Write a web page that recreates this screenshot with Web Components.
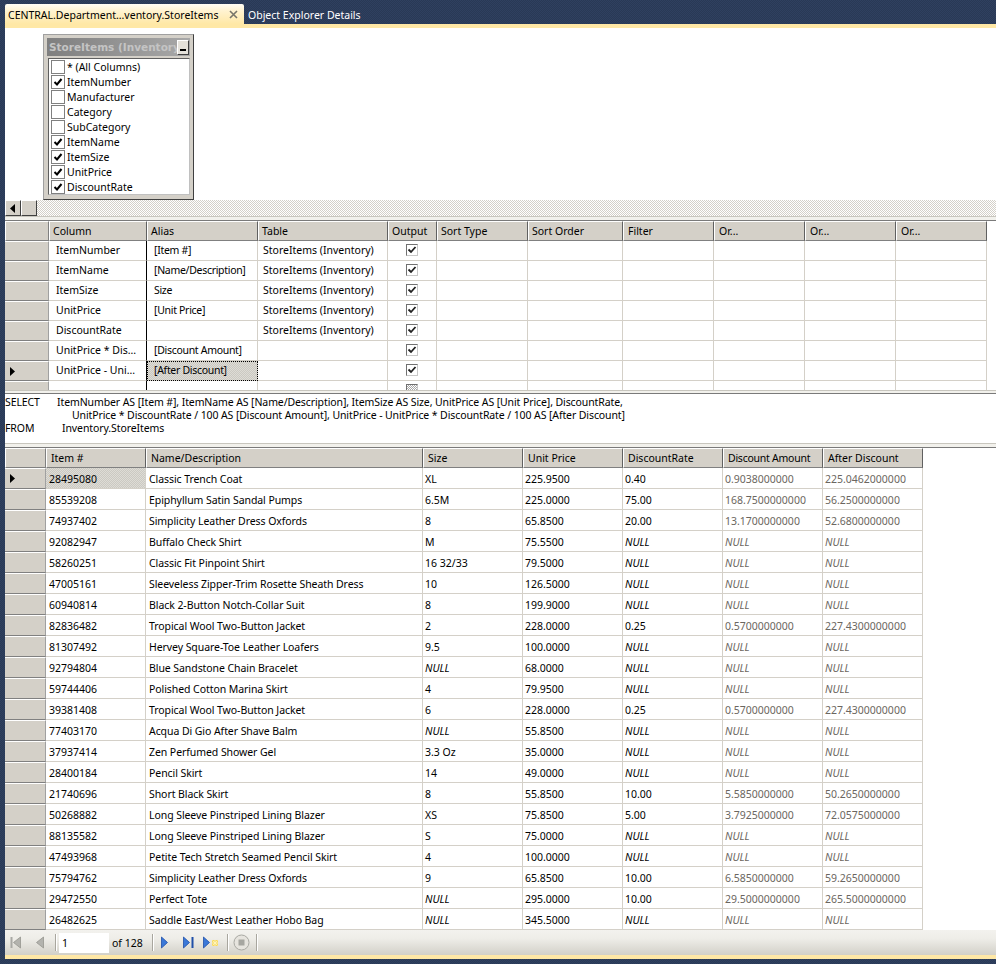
<!DOCTYPE html>
<html>
<head>
<meta charset="utf-8">
<title>Query Designer</title>
<style>
html,body{margin:0;height:100%;background:#293955;}
body{font:10.5px "Noto Sans",Arial,sans-serif;color:#000;overflow:hidden;}
</style>
</head>
<body>
<ide-shell>
  <ide-tab slot="tabs" active>CENTRAL.Department...ventory.StoreItems</ide-tab>
  <ide-tab slot="tabs">Object Explorer Details</ide-tab>

  <diagram-pane>
    <table-window name="StoreItems (Inventory)">
      <column-check>* (All Columns)</column-check>
      <column-check checked>ItemNumber</column-check>
      <column-check>Manufacturer</column-check>
      <column-check>Category</column-check>
      <column-check>SubCategory</column-check>
      <column-check checked>ItemName</column-check>
      <column-check checked>ItemSize</column-check>
      <column-check checked>UnitPrice</column-check>
      <column-check checked>DiscountRate</column-check>
    </table-window>
  </diagram-pane>
  <h-scrollbar></h-scrollbar>
  <pane-splitter style="height:5px"></pane-splitter>
  <data-grid id="criteria" style="--cols:44px 98px 111px 130px 49px 91px 95px 91px 91px 91px 91px;height:169px;--row-h:20px;--pb:2px"></data-grid>
  <pane-splitter></pane-splitter>
  <sql-pane>
    <sql-line slot="line" keyword="SELECT" indent="52">ItemNumber AS [Item #], ItemName AS [Name/Description], ItemSize AS Size, UnitPrice AS [Unit Price], DiscountRate,</sql-line>
    <sql-line slot="line" indent="67">UnitPrice * DiscountRate / 100 AS [Discount Amount], UnitPrice - UnitPrice * DiscountRate / 100 AS [After Discount]</sql-line>
    <sql-line slot="line" keyword="FROM" indent="57">Inventory.StoreItems</sql-line>
  </sql-pane>
  <pane-splitter style="height:5px"></pane-splitter>
  <data-grid id="results" style="--cols:41px 100px 277px 100px 100px 100px 100px 100px;flex:1;--row-h:21px;--pt:2px"></data-grid>
  <nav-toolbar page="1" total="128"></nav-toolbar>
</ide-shell>

<script>
// tab strip + document frame
class IdeShell extends HTMLElement{
  constructor(){
    super();
    this.attachShadow({mode:'open'});
    this.shadowRoot.innerHTML=`
    <style>
    :host{display:flex;flex-direction:column;height:964px;box-sizing:border-box;padding:4px 0 5px 5px;
      background:repeating-conic-gradient(#293955 0 25%,#2f4060 0 50%) 0 0/2px 2px;}
    .tabs{display:flex;height:20px;flex:none;}
    .frame{flex:1;display:flex;flex-direction:column;min-height:0;background:#fff;border-top:4px solid #ffe8a6;border-bottom:4px solid #ffe8a6;}
    </style>
    <div class="tabs"><slot name="tabs"></slot></div>
    <div class="frame"><slot></slot></div>`;
  }
}
customElements.define('ide-shell',IdeShell);

class IdeTab extends HTMLElement{
  constructor(){
    super();
    this.attachShadow({mode:'open'});
    const close=this.hasAttribute('active')
      ?`<svg width="9" height="9" viewBox="0 0 9 9"><path d="M1 1L8 8M8 1L1 8" stroke="#77756a" stroke-width="1.6" fill="none"/></svg>`:'';
    this.shadowRoot.innerHTML=`
    <style>
    :host{display:flex;align-items:center;height:20px;box-sizing:border-box;padding:1px 4px 0;color:#fff;white-space:nowrap;}
    :host([active]){width:239px;color:#000;padding:1px 6px 0 3px;justify-content:space-between;border-radius:2px 2px 0 0;
      background:linear-gradient(#fffdf6 0,#fff3d0 35%,#ffe8a6 100%);}
    </style>
    <slot></slot>${close}`;
  }
}
customElements.define('ide-tab',IdeTab);

// top pane with the table on it
class DiagramPane extends HTMLElement{
  constructor(){
    super();
    this.attachShadow({mode:'open'});
    this.shadowRoot.innerHTML=`
    <style>:host{display:block;height:172px;box-sizing:border-box;padding:6px 0 0 38px;background:#fff;overflow:hidden;}</style>
    <slot></slot>`;
  }
}
customElements.define('diagram-pane',DiagramPane);

class TableWindow extends HTMLElement{
  constructor(){
    super();
    this.attachShadow({mode:'open'});
    this.shadowRoot.innerHTML=`
    <style>
    :host{display:block;width:151px;height:166px;box-sizing:border-box;background:#d4d0c8;
      border:1px solid;border-color:#a0a0a0 #404040 #404040 #a0a0a0;padding:3px;}
    .title{display:flex;height:18px;background:linear-gradient(90deg,#7f7f7f,#a8a8a8);align-items:center;}
    .name{flex:1;min-width:0;overflow:hidden;white-space:nowrap;padding-left:2px;color:#c4c4c4;font:bold 10.5px "DejaVu Sans",sans-serif;}
    .min{flex:none;width:12px;height:15px;box-sizing:border-box;margin-right:1px;background:#e4e1da;border:1px solid;border-color:#fff #404040 #404040 #fff;display:flex;align-items:flex-end;justify-content:center;padding-bottom:3px;}
    .min i{display:block;width:6px;height:2px;background:#000;}
    .list{margin:2px 0 0 1px;height:137px;box-sizing:border-box;background:#fff;border:1px solid;border-color:#606060 #c0c0c0 #c0c0c0 #606060;padding:0 0 0 2px;overflow:hidden;}
    </style>
    <div class="title"><span class="name"></span><div class="min"><i></i></div></div>
    <div class="list"><slot></slot></div>`;
    this.shadowRoot.querySelector('.name').textContent=this.getAttribute('name');
  }
}
customElements.define('table-window',TableWindow);

class ColumnCheck extends HTMLElement{
  constructor(){
    super();
    this.attachShadow({mode:'open'});
    const tick=this.hasAttribute('checked')
      ?`<svg width="10" height="10" viewBox="0 0 10 10"><path d="M1.5 5L4 7.5L8.5 2" stroke="#000" stroke-width="2" fill="none"/></svg>`:'';
    this.shadowRoot.innerHTML=`
    <style>
    :host{display:flex;align-items:center;height:15px;color:#000;white-space:nowrap;}
    .box{flex:none;width:14px;height:14px;box-sizing:border-box;border:1px solid #808080;margin-right:2px;display:flex;align-items:center;justify-content:center;background:#fff;}
    </style>
    <span class="box">${tick}</span><slot></slot>`;
  }
}
customElements.define('column-check',ColumnCheck);

class HScrollbar extends HTMLElement{
  constructor(){
    super();
    this.attachShadow({mode:'open'});
    this.shadowRoot.innerHTML=`
    <style>
    :host{display:flex;flex:none;height:16px;background:repeating-conic-gradient(#d4d0c8 0 25%,#fff 0 50%) 0 0/2px 2px;}
    .b{flex:none;width:16px;box-sizing:border-box;background:#d4d0c8;border:1px solid;border-color:#fff #404040 #404040 #fff;display:flex;align-items:center;justify-content:center;}
    </style>
    <div class="b"><svg width="6" height="9" viewBox="0 0 6 9"><path d="M5 0V9L0 4.5Z" fill="#000"/></svg></div>
    <div class="b"></div>`;
  }
}
customElements.define('h-scrollbar',HScrollbar);

class PaneSplitter extends HTMLElement{
  constructor(){
    super();
    this.attachShadow({mode:'open'});
    this.shadowRoot.innerHTML=`
    <style>:host{display:block;flex:none;height:4px;box-sizing:border-box;background:#f2f1ec;border-top:1px solid #c8c6be;border-bottom:1px solid #7a7a7a;}</style>`;
  }
}
customElements.define('pane-splitter',PaneSplitter);

// generic grid used by criteria and results
class DataGrid extends HTMLElement{
  constructor(){
    super();
    this.attachShadow({mode:'open'});
    this.shadowRoot.innerHTML=`
    <style>:host{display:block;flex:none;overflow:hidden;min-height:0;background:#fff;}</style>
    <slot></slot>`;
  }
}
customElements.define('data-grid',DataGrid);

class GridRow extends HTMLElement{
  constructor(){
    super();
    this.attachShadow({mode:'open'});
    this.shadowRoot.innerHTML=`
    <style>
    :host{display:grid;grid-template-columns:var(--cols);height:var(--row-h);width:max-content;}
    :host([header]){height:20px;}
    .gutter{box-sizing:border-box;background:#d4d0c8;border-top:1px solid #fff;border-bottom:1px solid #808080;border-right:1px solid #a0a0a0;display:flex;align-items:center;padding-left:5px;}
    :host([header]) .gutter{border-left:1px solid #fff;border-right:1px solid #808080;}
    </style>
    <div class="gutter"></div><slot></slot>`;
  }
  connectedCallback(){
    if(this.hasAttribute('current'))
      this.shadowRoot.querySelector('.gutter').innerHTML=`<svg width="5" height="9" viewBox="0 0 5 9"><path d="M0 0V9L5 4.5Z" fill="#000"/></svg>`;
  }
}
customElements.define('grid-row',GridRow);

class GridCell extends HTMLElement{
  constructor(){
    super();
    this.attachShadow({mode:'open'});
    this.shadowRoot.innerHTML=`
    <style>
    :host{display:flex;align-items:center;box-sizing:border-box;min-width:0;overflow:hidden;white-space:nowrap;
      border-right:1px solid #d4d0c8;border-bottom:1px solid #d4d0c8;padding:var(--pt,0) 0 var(--pb,0) var(--pad,3px);color:#000;}
    :host([head]){background:#d4d0c8;border-top:1px solid #fff;border-left:1px solid #fff;border-right:1px solid #606060;border-bottom:1px solid #808080;padding:0 0 0 var(--pad,4px);}
    :host([null]){font-style:italic;}
    :host([calc]){color:#6b6660;}
    :host([center]){justify-content:center;padding:0 0 var(--pb,0);}
    :host([dither]){background:repeating-conic-gradient(#cbc9c2 0 25%,#dedcd6 0 50%) 0 0/2px 2px;}
    :host([focus]){outline:1px dotted #000;outline-offset:-1px;}
    </style>
    <slot></slot>`;
  }
}
customElements.define('grid-cell',GridCell);

class OutputCheck extends HTMLElement{
  constructor(){
    super();
    this.attachShadow({mode:'open'});
    this.shadowRoot.innerHTML=`
    <style>
    :host{display:block;width:12px;height:12px;flex:none;box-sizing:border-box;border:1px solid;border-color:#707070 #c8c8c8 #c8c8c8 #707070;background:#fff;}
    :host([mixed]){background:repeating-conic-gradient(#a8a8a8 0 25%,#fff 0 50%) 0 0/2px 2px;}
    :host([mixed]) svg{display:none;}
    svg{display:block;}
    </style>
    <svg width="10" height="10" viewBox="0 0 10 10"><path d="M1.5 4.5L4 7L8.5 2" stroke="#222" stroke-width="1.8" fill="none"/></svg>`;
  }
}
customElements.define('output-check',OutputCheck);

class SqlPane extends HTMLElement{
  constructor(){
    super();
    this.attachShadow({mode:'open'});
    this.shadowRoot.innerHTML=`
    <style>:host{display:block;flex:none;height:49px;box-sizing:border-box;padding-top:2px;background:#fff;letter-spacing:-.1px;}</style>
    <slot name="line"></slot>`;
  }
}
customElements.define('sql-pane',SqlPane);

class SqlLine extends HTMLElement{
  constructor(){
    super();
    this.attachShadow({mode:'open'});
    this.shadowRoot.innerHTML=`
    <style>
    :host{display:flex;height:13px;line-height:13px;white-space:nowrap;color:#000;}
    .kw{flex:none;}
    </style>
    <span class="kw"></span><slot></slot>`;
    const kw=this.shadowRoot.querySelector('.kw');
    kw.textContent=this.getAttribute('keyword')||'';
    kw.style.width=this.getAttribute('indent')+'px';
  }
}
customElements.define('sql-line',SqlLine);

class NavToolbar extends HTMLElement{
  constructor(){
    super();
    this.attachShadow({mode:'open'});
    this.shadowRoot.innerHTML=`
    <style>
    :host{display:flex;flex:none;align-items:center;height:25px;box-sizing:border-box;padding-left:5px;
      background:linear-gradient(#f3f2ee 0,#eeede8 35%,#d2d0c8 100%);color:#000;}
    svg{display:block;flex:none;}
    .sep{flex:none;width:1px;height:17px;background:#a8a69e;box-shadow:1px 0 0 #fff;}
    .page{flex:none;width:50px;height:20px;box-sizing:border-box;background:#fff;padding:0 3px;line-height:20px;margin:0 3px;}
    .of{flex:none;width:40px;white-space:nowrap;}
    </style>
    <svg width="11" height="13" viewBox="0 0 11 13"><path d="M1.5 1V12" stroke="#a9a9a4" stroke-width="2"/><path d="M10.5 1V12L3.5 6.5Z" fill="#b3b3ae" stroke="#96968f" stroke-width=".8"/></svg>
    <svg style="margin-left:15px" width="8" height="13" viewBox="0 0 8 13"><path d="M7.5 1V12L.5 6.5Z" fill="#b3b3ae" stroke="#96968f" stroke-width=".8"/></svg>
    <div class="sep" style="margin-left:11px"></div>
    <div class="page"></div>
    <div class="of"></div>
    <div class="sep"></div>
    <svg style="margin-left:8px" width="8" height="13" viewBox="0 0 8 13"><path d="M.5 1V12L6.5 6.5Z" fill="#3a78d8" stroke="#1f4fa8" stroke-width=".8"/></svg>
    <svg style="margin-left:14px" width="11" height="13" viewBox="0 0 11 13"><path d="M.5 1V12L6.5 6.5Z" fill="#3a78d8" stroke="#1f4fa8" stroke-width=".8"/><path d="M9.5 1V12" stroke="#1f4fa8" stroke-width="2"/></svg>
    <svg style="margin-left:9px" width="16" height="13" viewBox="0 0 16 13"><path d="M.5 1V12L6.5 6.5Z" fill="#3a78d8" stroke="#1f4fa8" stroke-width=".8"/><path d="M9 4h6v6H9z" fill="#f6d860"/><path d="M9 7h6M12 4v6M9.5 4.5l5 5M14.5 4.5l-5 5" stroke="#fff6c0" stroke-width=".8"/></svg>
    <div class="sep" style="margin-left:8px"></div>
    <svg style="margin-left:5px" width="17" height="17" viewBox="0 0 17 17"><circle cx="8.5" cy="8.5" r="7.5" fill="#e6e4de" stroke="#a8a8a2"/><rect x="5.5" y="5.5" width="6" height="6" fill="#a6a6a0"/></svg>
    <div class="sep" style="margin-left:6px"></div>`;
    this.shadowRoot.querySelector('.page').textContent=this.getAttribute('page');
    this.shadowRoot.querySelector('.of').textContent='of '+this.getAttribute('total');
  }
}
customElements.define('nav-toolbar',NavToolbar);

// fill the grids
function cell(text,attrs,pad){
  const c=document.createElement('grid-cell');
  if(text)c.textContent=text;
  for(const a of attrs||[])c.setAttribute(a,'');
  if(pad!==undefined)c.style.setProperty('--pad',pad+'px');
  return c;
}
function row(cells,attrs){
  const r=document.createElement('grid-row');
  for(const a of attrs||[])r.setAttribute(a,'');
  r.append(...cells);
  return r;
}

const criteria=document.getElementById('criteria');
const critHead=['Column','Alias','Table','Output','Sort Type','Sort Order','Filter','Or...','Or...','Or...'];
criteria.append(row(critHead.map((h,i)=>cell(h,['head'],i>=6?4:3)),['header']));
const critRows=[
  ['ItemNumber','[Item #]','StoreItems (Inventory)'],
  ['ItemName','[Name/Description]','StoreItems (Inventory)'],
  ['ItemSize','Size','StoreItems (Inventory)'],
  ['UnitPrice','[Unit Price]','StoreItems (Inventory)'],
  ['DiscountRate','','StoreItems (Inventory)'],
  ['UnitPrice * Dis...','[Discount Amount]',''],
  ['UnitPrice - Uni...','[After Discount]',''],
  ['','','']
];
critRows.forEach((r,n)=>{
  const last=n==7, cur=n==6;
  const alias=cell(r[1],cur?['dither','focus']:[],7);
  alias.style.letterSpacing='-.3px';
  const cs=[cell(r[0],[],7),alias,cell(r[2],[],5)];
  const out=cell('',['center']);
  const chk=document.createElement('output-check');
  if(last)chk.setAttribute('mixed','');
  out.append(chk);
  cs.push(out);
  for(let i=0;i<6;i++)cs.push(cell('',[]));
  cs[0].style.borderRight='1px solid #000';
  criteria.append(row(cs,cur?['current']:[]));
});

const results=document.getElementById('results');
const resHead=['Item #','Name/Description','Size','Unit Price','DiscountRate','Discount Amount','After Discount'];
results.append(row(resHead.map((h,i)=>{
  const c=cell(h,['head'],4);
  if(i==5)c.style.letterSpacing='-.25px';
  return c;
}),['header']));
const N='NULL';
const data=[
['28495080','Classic Trench Coat','XL','225.9500','0.40','0.9038000000','225.0462000000'],
['85539208','Epiphyllum Satin Sandal Pumps','6.5M','225.0000','75.00','168.7500000000','56.2500000000'],
['74937402','Simplicity Leather Dress Oxfords','8','65.8500','20.00','13.1700000000','52.6800000000'],
['92082947','Buffalo Check Shirt','M','75.5500',N,N,N],
['58260251','Classic Fit Pinpoint Shirt','16 32/33','79.5000',N,N,N],
['47005161','Sleeveless Zipper-Trim Rosette Sheath Dress','10','126.5000',N,N,N],
['60940814','Black 2-Button Notch-Collar Suit','8','199.9000',N,N,N],
['82836482','Tropical Wool Two-Button Jacket','2','228.0000','0.25','0.5700000000','227.4300000000'],
['81307492','Hervey Square-Toe Leather Loafers','9.5','100.0000',N,N,N],
['92794804','Blue Sandstone Chain Bracelet',N,'68.0000',N,N,N],
['59744406','Polished Cotton Marina Skirt','4','79.9500',N,N,N],
['39381408','Tropical Wool Two-Button Jacket','6','228.0000','0.25','0.5700000000','227.4300000000'],
['77403170','Acqua Di Gio After Shave Balm',N,'55.8500',N,N,N],
['37937414','Zen Perfumed Shower Gel','3.3 Oz','35.0000',N,N,N],
['28400184','Pencil Skirt','14','49.0000',N,N,N],
['21740696','Short Black Skirt','8','55.8500','10.00','5.5850000000','50.2650000000'],
['50268882','Long Sleeve Pinstriped Lining Blazer','XS','75.8500','5.00','3.7925000000','72.0575000000'],
['88135582','Long Sleeve Pinstriped Lining Blazer','S','75.0000',N,N,N],
['47493968','Petite Tech Stretch Seamed Pencil Skirt','4','100.0000',N,N,N],
['75794762','Simplicity Leather Dress Oxfords','9','65.8500','10.00','6.5850000000','59.2650000000'],
['29472550','Perfect Tote',N,'295.0000','10.00','29.5000000000','265.5000000000'],
['26482625','Saddle East/West Leather Hobo Bag',N,'345.5000',N,N,N]
];
data.forEach((r,n)=>{
  const cs=r.map((v,i)=>{
    const a=[];
    if(v===N)a.push('null');
    if(i>=5)a.push('calc');
    if(n==0&&i==0)a.push('dither');
    const c=cell(v,a,i>=2?2:3);
    if(i==1)c.style.letterSpacing='-.07px';
    return c;
  });
  results.append(row(cs,n==0?['current']:[]));
});
</script>
</body>
</html>
